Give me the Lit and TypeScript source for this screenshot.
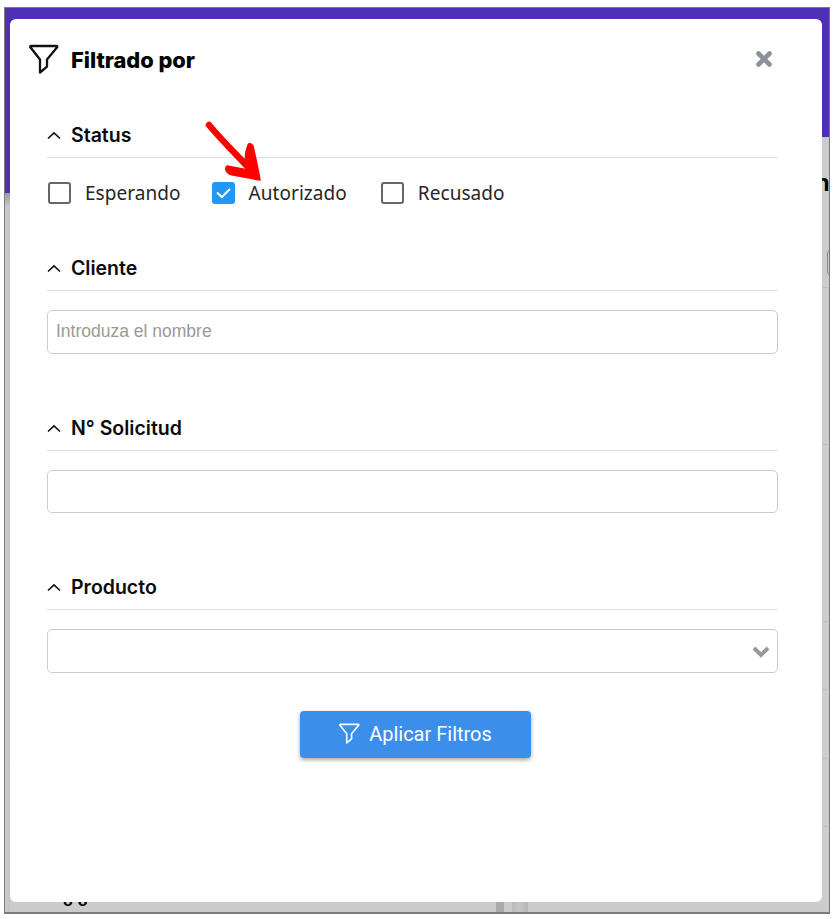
import { LitElement, html, css, svg } from "lit";
import { customElement, state } from "lit/decorators.js";
import { classMap } from "lit/directives/class-map.js";

const chevronUp = html`<svg class="chev" viewBox="0 0 14 9" width="14" height="9"><path d="M1 7.5 7 1.8l6 5.7" fill="none" stroke="#111" stroke-width="1.6"/></svg>`;
const funnel = svg`<path d="M2 2h25.5c.8 0 1 .8.6 1.3L18 15.5v7.2L11 28.5V15.5L1.4 3.3C1 2.8 1.2 2 2 2z" fill="none" stroke="currentColor" stroke-width="2.3" stroke-linejoin="round"/>`;

@customElement("app-root")
export class AppRoot extends LitElement {
  @state() private status: Record<string, boolean> = { Esperando: false, Autorizado: true, Recusado: false };

  static styles = css`
    :host { display: block; width: 838px; height: 919px; background: #fff; font-family: "Inter", sans-serif; }
    .frame { position: relative; box-sizing: border-box; width: 826px; height: 907px; margin: 7px 0 0 4px; border: 1px solid #7c7c7c; border-bottom-width: 2px; overflow: hidden; background: #ccc; display: flex; flex-direction: column; }
    .banner { height: 129px; flex: none; background: #4f2fb5; }
    .rows { flex: 1; display: flex; flex-direction: column; }
    .row { flex: none; border-bottom: 1px solid #bdbdbd; box-sizing: border-box; }
    .tab { position: absolute; left: 0; top: 0; width: 5px; height: 185px; background: #4f2fb5; }
    .fade { position: absolute; left: 0; top: 185px; width: 5px; height: 14px; background: linear-gradient(#999, #ccc); }
    .stripe { position: absolute; left: 0; top: 199px; bottom: 0; width: 5px; background: linear-gradient(90deg, #ccc, #c4c4c4); }
    .peek { position: absolute; left: 810px; top: 160px; font: 700 24px/30px "Liberation Sans", sans-serif; color: #000; white-space: nowrap; }
    .pill { position: absolute; left: 822px; top: 240px; width: 12px; height: 27px; border: 1px solid #888; border-radius: 6px; }
    .oo { position: absolute; left: 58px; top: 885px; font: 700 16px/16px "Liberation Sans", sans-serif; letter-spacing: 5px; color: #000; }
    .sb1 { position: absolute; left: 491px; bottom: 0; width: 8px; height: 11px; background: #aaa; }
    .sb2 { position: absolute; left: 507px; bottom: 0; width: 16px; height: 11px; background: linear-gradient(90deg, #bbb, #c6c6c6, #b6b6b6); }

    .modal { position: absolute; left: 5px; top: 11px; width: 812px; height: 883px; box-sizing: border-box; padding: 19px 44px 0 37px; background: #fff; border-radius: 6px; display: flex; flex-direction: column; }
    .head { height: 42px; flex: none; display: flex; align-items: center; margin: 0 0 33px -18px; color: #000; }
    .head svg.f { flex: none; color: #111; }
    .head h1 { margin: 2px 0 0 12px; font-size: 21.8px; line-height: 26px; font-weight: 800; flex: 1; }
    .close { flex: none; margin: 3px 5px 0 0; background: none; border: 0; padding: 0; display: block; }
    .sec { height: 45px; box-sizing: border-box; flex: none; display: flex; align-items: center; gap: 10px; border-bottom: 1px solid #ddd; }
    .sec h2 { margin: 0; font-size: 19.5px; line-height: 24px; font-weight: 600; color: #0b0b0b; }
    .checks { height: 88px; flex: none; box-sizing: border-box; padding-top: 24px; display: flex; align-items: flex-start; padding-left: 1px; }
    .check { display: flex; align-items: center; gap: 14px; height: 22px; font: 400 19px/24px "Noto Sans", sans-serif; letter-spacing: 0.05px; color: #262626; margin-right: 31px; cursor: pointer; }
    .check:nth-child(2) { margin-right: 34px; }
    .box { width: 23px; height: 22px; box-sizing: border-box; border: 2px solid #666; border-radius: 3px; display: flex; align-items: center; justify-content: center; }
    .box.on { background: #2196f3; border-color: #2196f3; }
    .ctl { display: block; box-sizing: border-box; width: 100%; margin-top: 19px; margin-bottom: 52px; border: 1px solid #ccc; border-radius: 5px; background: #fff; padding: 0 8px 2px; font: 400 17.5px "Liberation Sans", sans-serif; color: #333; outline: none; flex: none; }
    .ctl::placeholder { color: #999; opacity: 1; }
    .h44 { height: 44px; }
    .h43 { height: 43px; }
    .selwrap { position: relative; flex: none; }
    .selwrap select { appearance: none; margin-bottom: 38px; }
    .selwrap svg { position: absolute; right: 7px; top: 35px; pointer-events: none; }
    .apply { align-self: center; margin-left: 6px; width: 231px; height: 47px; flex: none; display: flex; align-items: center; justify-content: center; gap: 9px; padding: 0 0 2px; background: #3b8eea; color: #fff; border: 0; border-radius: 4px; box-shadow: 0 2px 4px rgba(0,0,0,.35); font: 400 20px/24px "Roboto", sans-serif; cursor: pointer; }
    .arrow { position: absolute; left: 0; top: 0; width: 838px; height: 919px; pointer-events: none; }
  `;

  private toggle(k: string) {
    this.status = { ...this.status, [k]: !this.status[k] };
  }

  render() {
    return html`
      <div class="frame">
        <div class="banner"></div>
        <div class="rows">
          ${[151, 157, 177, 68, 69, 68].map((h) => html`<div class="row" style="height:${h}px"></div>`)}
        </div>
        <div class="tab"></div><div class="fade"></div><div class="stripe"></div>
        <div class="peek">n</div>
        <div class="pill"></div>
        <div class="oo">oo</div>
        <div class="sb1"></div><div class="sb2"></div>
        <div class="modal">
          <div class="head">
            <svg class="f" width="30" height="30" viewBox="0 0 30 30">${funnel}</svg>
            <h1>Filtrado por</h1>
            <button class="close" aria-label="Cerrar">
              <svg width="18" height="18" viewBox="0 0 18 18"><path d="M3.5 3.5l11 11M14.5 3.5l-11 11" stroke="#8a9299" stroke-width="4.6" stroke-linecap="round"/></svg>
            </button>
          </div>

          <div class="sec">${chevronUp}<h2>Status</h2></div>
          <div class="checks">
            ${Object.keys(this.status).map((k) => html`
              <div class="check" @click=${() => this.toggle(k)}>
                <span class=${classMap({ box: true, on: this.status[k] })}>
                  ${this.status[k] ? html`<svg width="15" height="12" viewBox="0 0 15 12"><path d="M1 5.5l4.8 4.5L14 2" fill="none" stroke="#fff" stroke-width="2"/></svg>` : ""}
                </span>
                <span>${k}</span>
              </div>`)}
          </div>

          <div class="sec">${chevronUp}<h2>Cliente</h2></div>
          <input class="ctl h44" placeholder="Introduza el nombre" />

          <div class="sec">${chevronUp}<h2>N° Solicitud</h2></div>
          <input class="ctl h43" />

          <div class="sec">${chevronUp}<h2>Producto</h2></div>
          <div class="selwrap">
            <select class="ctl h44"><option></option></select>
            <svg width="20" height="14" viewBox="0 0 20 14"><path d="M3 3l7 7 7-7" fill="none" stroke="#999" stroke-width="4"/></svg>
          </div>

          <button class="apply">
            <svg width="21" height="21" viewBox="0 0 30 30">${funnel}</svg>
            <span>Aplicar Filtros</span>
          </button>
        </div>
      </div>
      <svg class="arrow" viewBox="0 0 838 919">
        <path d="M209 125C224 143 242 160 256 176" fill="none" stroke="#f00" stroke-width="6.5" stroke-linecap="round"/>
        <path d="M248 145C244 155 245 165 248 170L227 166C224 169 227 174 233 175L260 180C258 168 255 155 253 146 251 143 249 143 248 145Z" fill="#f00" stroke="#f00" stroke-width="1.5" stroke-linejoin="round"/>
      </svg>
    `;
  }
}
